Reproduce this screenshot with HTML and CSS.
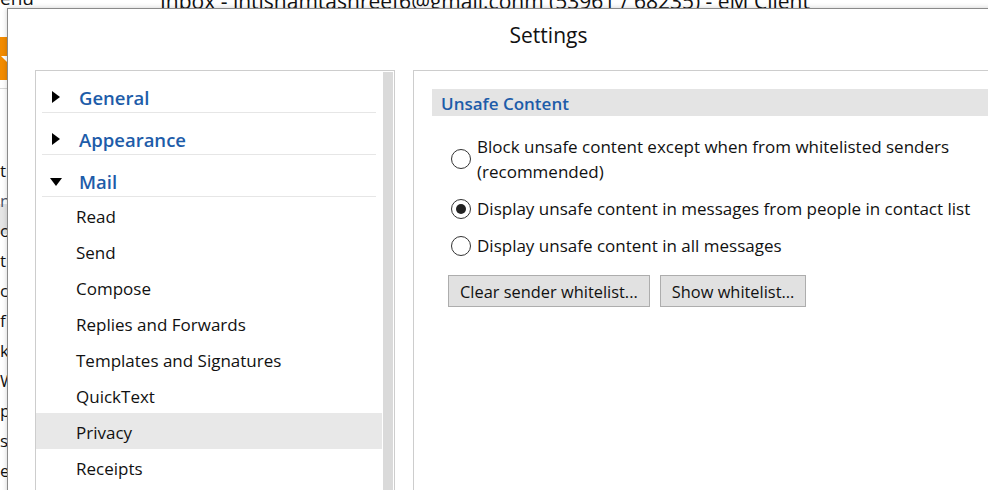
FILE: index.html
```html
<!DOCTYPE html>
<html lang="en">

<head>
  <meta charset="UTF-8">
  <meta name="viewport" content="width=device-width, initial-scale=1.0">
  <title>Settings</title>
  <link rel="stylesheet" href="styles.css">
</head>

<body>

  <!-- main window behind the dialog -->
  <div class="app">
    <div class="app-bar">
      <span class="app-menu">enu</span>
      <span class="app-title">Inbox - ihtishamtashreef6@gmail.conm (53961 / 68235) - eM Client</span>
    </div>
    <div class="side">
      <div class="side-btn"><span class="side-arrow"></span></div>
      <div class="side-rule"></div>
      <ul class="side-list">
        <li>t</li>
        <li class="muted">na</li>
        <li class="current">o</li>
        <li>t</li>
        <li>ch</li>
        <li>f</li>
        <li>k</li>
        <li>W</li>
        <li>pd</li>
        <li>sc</li>
        <li>e</li>
      </ul>
    </div>
  </div>

  <div class="dialog">
    <div class="dialog-title">Settings</div>

    <div class="dialog-body">
      <div class="nav">
        <ul class="tree">
          <li class="group"><span class="arrow right"></span>General</li>
          <li class="group"><span class="arrow right"></span>Appearance</li>
          <li class="group"><span class="arrow down"></span>Mail</li>
          <li class="item">Read</li>
          <li class="item">Send</li>
          <li class="item">Compose</li>
          <li class="item">Replies and Forwards</li>
          <li class="item">Templates and Signatures</li>
          <li class="item">QuickText</li>
          <li class="item selected">Privacy</li>
          <li class="item">Receipts</li>
        </ul>
        <div class="scrollbar"></div>
      </div>

      <div class="page">
        <div class="section-head">Unsafe Content</div>

        <div class="options">
          <label class="option">
            <span class="radio"></span>
            <span class="option-text">Block unsafe content except when from whitelisted senders<br>(recommended)</span>
          </label>
          <label class="option">
            <span class="radio checked"></span>
            <span class="option-text">Display unsafe content in messages from people in contact list</span>
          </label>
          <label class="option">
            <span class="radio"></span>
            <span class="option-text">Display unsafe content in all messages</span>
          </label>
        </div>

        <div class="actions">
          <button class="btn" type="button">Clear sender whitelist...</button>
          <button class="btn" type="button">Show whitelist...</button>
        </div>
      </div>
    </div>
  </div>

</body>

</html>
```

FILE: styles.css
```css
* {
  box-sizing: border-box;
}

body {
  margin: 0;
  width: 988px;
  height: 490px;
  overflow: hidden;
  position: relative;
  background-color: #fff;
  font-family: "Open Sans", "Noto Sans", sans-serif;
  color: #111;
}

ul {
  margin: 0;
  padding: 0;
  list-style: none;
}

/* main window */
.app-bar {
  height: 9px;
  display: flex;
  white-space: nowrap;
}

.app-menu {
  font-size: 19px;
  line-height: 19px;
  margin-top: -11px;
  width: 160px;
}

.app-title {
  font-size: 21px;
  line-height: 21px;
  margin-top: -9px;
}

.side {
  width: 7px;
  overflow: hidden;
}

.side-btn {
  position: relative;
  margin-top: 28px;
  height: 43px;
  background-color: #f28b00;
}

.side-arrow {
  position: absolute;
  left: 1px;
  top: 19px;
  border-left: 6px solid transparent;
  border-right: 6px solid transparent;
  border-top: 6px solid #fff;
}

.side-rule {
  margin-top: 8px;
  height: 1px;
  background-color: #d9d9d9;
}

.side-list {
  margin-top: 67px;
  font-size: 17px;
}

.side-list li {
  height: 30px;
  line-height: 30px;
  white-space: nowrap;
}

.side-list .muted {
  color: #4a5568;
}

.side-list .current {
  background: linear-gradient(#e5e5e5 18px, transparent 18px);
  box-shadow: 0 -12px 0 #e5e5e5;
}

/* settings dialog */
.dialog {
  position: absolute;
  left: 7px;
  top: 8px;
  width: 1083px;
  height: 520px;
  background-color: #fff;
  border: 1px solid #8a8a8a;
  box-shadow: 0 0 5px rgba(0, 0, 0, 0.2);
}

.dialog-title {
  height: 61px;
  line-height: 52px;
  text-align: center;
  font-size: 21px;
}

.dialog-body {
  display: flex;
  gap: 18px;
  padding-left: 27px;
}

.nav {
  width: 360px;
  height: 460px;
  display: flex;
  border: 1px solid #cdcdcd;
  padding: 0 1px 0 0;
}

.tree {
  flex: 1;
}

.scrollbar {
  width: 10px;
  margin: 1px 0 0 1px;
  background-color: #dadada;
}

.group {
  display: flex;
  align-items: center;
  height: 42px;
  padding-top: 11px;
  margin: 0 6px;
  border-bottom: 1px solid #e6e6e6;
  font-size: 18.5px;
  font-weight: 600;
  color: #1d5ca9;
}

.arrow {
  width: 16px;
  height: 16px;
  margin: 0 15px 0 6px;
  display: flex;
  align-items: center;
  justify-content: center;
}

.arrow::before {
  content: "";
  border-style: solid;
  border-color: transparent;
}

.arrow.right::before {
  border-width: 6.5px 0 6.5px 8px;
  border-left-color: #000;
}

.arrow.down::before {
  margin-top: 2px;
  border-width: 8px 6.5px 0 6.5px;
  border-top-color: #000;
}

.item {
  height: 36px;
  line-height: 34px;
  padding: 3px 0 0 40px;
  font-size: 17px;
}

.item.selected {
  background-color: #e8e8e8;
}

.page {
  flex: 1;
  height: 460px;
  border: 1px solid #cdcdcd;
  border-right: none;
  padding: 18px 0 0 18px;
}

.section-head {
  height: 27px;
  line-height: 29px;
  padding-left: 9px;
  background-color: #e4e4e4;
  font-size: 17px;
  font-weight: 600;
  color: #1d5ca9;
}

.options {
  display: flex;
  flex-direction: column;
  gap: 12px;
  margin-top: 18px;
  padding-left: 19px;
}

.option {
  display: flex;
  align-items: center;
  gap: 6px;
  font-size: 17px;
  line-height: 25px;
}

.radio {
  width: 20px;
  height: 20px;
  flex-shrink: 0;
  border: 1px solid #333;
  border-radius: 50%;
  display: flex;
  align-items: center;
  justify-content: center;
}

.radio.checked::before {
  content: "";
  width: 10px;
  height: 10px;
  border-radius: 50%;
  background-color: #222;
}

.actions {
  display: flex;
  gap: 10px;
  margin-top: 17px;
  padding-left: 16px;
}

.btn {
  height: 32px;
  padding: 0 11px;
  font-family: inherit;
  font-size: 16.4px;
  color: #111;
  background-color: #e1e1e1;
  border: 1px solid #adadad;
  border-radius: 0;
}
```
